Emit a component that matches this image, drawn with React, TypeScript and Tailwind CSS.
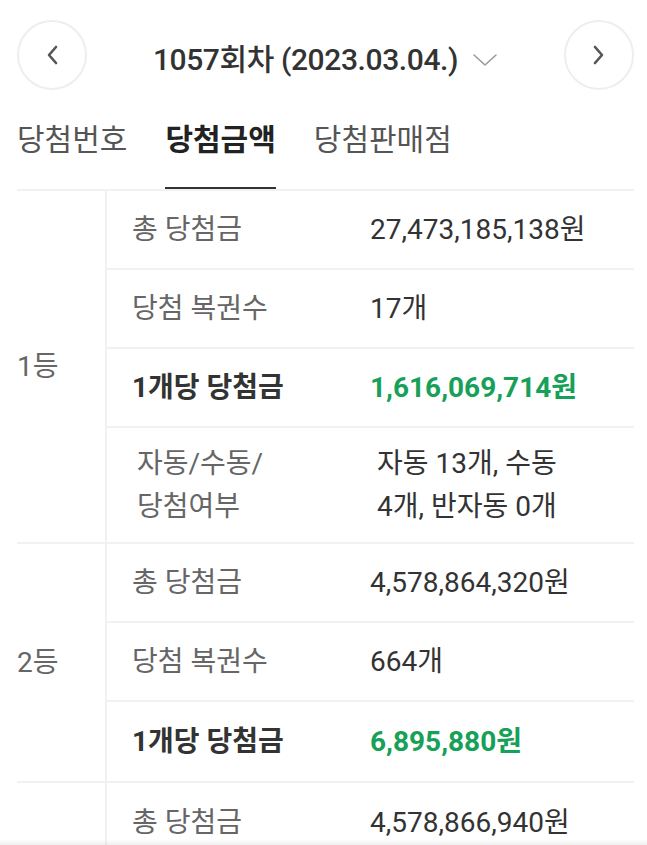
import React from "react";

const font = { fontFamily: 'Roboto, "Noto Sans CJK KR", sans-serif' };

type Row = { label: React.ReactNode; value: React.ReactNode; strong?: boolean; tall?: boolean };

function SubRow({ row, last }: { row: Row; last: boolean }) {
  return (
    <div
      className={`flex items-center ${row.tall ? "h-[114px]" : "h-[79px]"} ${last ? "" : "border-b-2 border-[#f1f1f1]"}`}
    >
      <div
        className={`w-[241px] shrink-0 ${row.tall ? "pl-[30px]" : "pl-[25px]"} leading-[43px] ${
          row.strong ? "font-bold text-[#333]" : "text-[#666]"
        }`}
      >
        {row.label}
      </div>
      <div
        className={`flex-1 ${row.tall ? "pl-[29px]" : "pl-[22px]"} leading-[43px] ${
          row.strong ? "font-bold text-[#17a058]" : "text-[#333]"
        }`}
      >
        {row.value}
      </div>
    </div>
  );
}

function Group({ rank, rows }: { rank: string; rows: Row[] }) {
  return (
    <div className="flex border-b-2 border-[#f1f1f1]">
      <div className="w-[88px] shrink-0 flex items-center text-[#666]">{rank}</div>
      <div className="flex-1 border-l-2 border-[#f1f1f1]">
        {rows.map((r, i) => (
          <SubRow key={i} row={r} last={i === rows.length - 1} />
        ))}
      </div>
    </div>
  );
}

export default function App() {
  return (
    <div className="w-[647px] h-[845px] overflow-hidden bg-white relative" style={font}>
      <div className="pl-[17px] pr-[13px]">
        {/* header */}
        <div className="flex items-center justify-between pt-[20px] h-[90px]">
          <button className="w-[70px] h-[70px] rounded-full border-2 border-[#eeeeee] flex items-center justify-center">
            <svg width="14" height="22" viewBox="0 0 14 22" fill="none">
              <path d="M11 3 L4 11 L11 19" stroke="#555" strokeWidth="2.6" strokeLinecap="round" strokeLinejoin="round" />
            </svg>
          </button>
          <div className="flex items-center gap-[14px] text-[30px] font-medium text-[#333] tracking-[-0.4px] mt-[8px]">
            <span>1057회차 (2023.03.04.)</span>
            <svg width="26" height="14" viewBox="0 0 26 14" fill="none" className="mt-[2px]">
              <path d="M2 2 L13 12 L24 2" stroke="#9a9a9a" strokeWidth="1.6" strokeLinecap="round" strokeLinejoin="round" />
            </svg>
          </div>
          <button className="w-[70px] h-[70px] rounded-full border-2 border-[#eeeeee] flex items-center justify-center">
            <svg width="14" height="22" viewBox="0 0 14 22" fill="none">
              <path d="M3 3 L10 11 L3 19" stroke="#555" strokeWidth="2.6" strokeLinecap="round" strokeLinejoin="round" />
            </svg>
          </button>
        </div>

        {/* tabs */}
        <div className="flex items-end gap-[38px] h-[99px] text-[30px]">
          <div className="pb-[25px] text-[#555] border-b-2 border-transparent">당첨번호</div>
          <div className="pb-[25px] font-bold text-[#222] border-b-2 border-[#333]">당첨금액</div>
          <div className="pb-[25px] text-[#555] border-b-2 border-transparent">당첨판매점</div>
        </div>

        {/* table */}
        <div className="border-t-2 border-[#f1f1f1] text-[28px]">
          <Group
            rank="1등"
            rows={[
              { label: "총 당첨금", value: "27,473,185,138원" },
              { label: "당첨 복권수", value: "17개" },
              { label: "1개당 당첨금", value: "1,616,069,714원", strong: true },
              {
                label: (
                  <>
                    자동/수동/
                    <br />
                    당첨여부
                  </>
                ),
                value: (
                  <>
                    자동 13개, 수동
                    <br />
                    4개, 반자동 0개
                  </>
                ),
                tall: true,
              },
            ]}
          />
          <Group
            rank="2등"
            rows={[
              { label: "총 당첨금", value: "4,578,864,320원" },
              { label: "당첨 복권수", value: "664개" },
              { label: "1개당 당첨금", value: "6,895,880원", strong: true },
            ]}
          />
          <Group rank="" rows={[{ label: "총 당첨금", value: "4,578,866,940원" }]} />
        </div>
      </div>
      <div className="absolute left-0 right-0 bottom-0 h-[6px] bg-gradient-to-b from-transparent to-[#00000010]" />
    </div>
  );
}
